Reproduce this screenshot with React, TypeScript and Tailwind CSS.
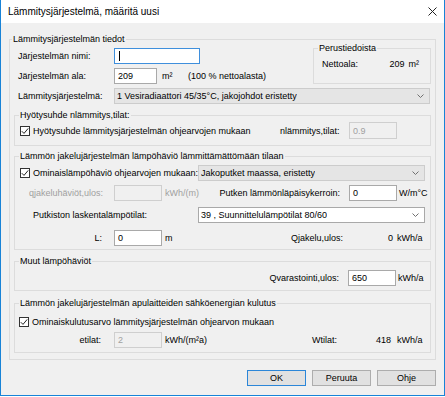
import React from "react";

const Chevron = () => (
  <svg width="7" height="4" viewBox="0 0 7 4" className="shrink-0">
    <path d="M0.5 0.5 L3.5 3.5 L6.5 0.5" fill="none" stroke="#707070" strokeWidth="1" />
  </svg>
);

const Check = () => (
  <span className="w-[10px] h-[10px] border border-[#333333] bg-white flex items-center justify-center shrink-0">
    <svg width="8" height="8" viewBox="0 0 8 8">
      <path d="M0.8 4.2 L3 6.4 L7.2 1.4" fill="none" stroke="#222222" strokeWidth="1" />
    </svg>
  </span>
);

interface BoxProps {
  className?: string;
  value?: string;
  disabled?: boolean;
  focused?: boolean;
}

const TextBox: React.FC<BoxProps> = ({ className = "", value, disabled, focused }) => (
  <div
    className={`h-[16px] border flex items-center pl-[3px] shrink-0 ${
      disabled
        ? "bg-[#f0f0f0] border-[#cfcfcf] text-[#a0a0a0]"
        : focused
        ? "bg-white border-[#3f8fdc]"
        : "bg-white border-[#a9a9a9]"
    } ${className}`}
  >
    {focused ? <span className="w-px h-[10px] bg-black ml-[1px]" /> : value}
  </div>
);

const Combo: React.FC<{ className?: string; value: string; gray?: boolean }> = ({ className = "", value, gray }) => (
  <div
    className={`h-[16px] border flex items-center justify-between pl-[2px] pr-[5px] shrink-0 ${
      gray ? "bg-[#e5e5e5] border-[#cccccc]" : "bg-white border-[#a9a9a9]"
    } ${className}`}
  >
    <span className="truncate">{value}</span>
    <Chevron />
  </div>
);

const Group: React.FC<{ title: string; className?: string; children: React.ReactNode }> = ({
  title,
  className = "",
  children,
}) => (
  <fieldset className={`border border-[#dcdcdc] ${className}`}>
    <legend className="ml-[4px] px-[1px] leading-[12px]">{title}</legend>
    {children}
  </fieldset>
);

const Btn: React.FC<{ label: string; primary?: boolean }> = ({ label, primary }) => (
  <button
    className={`w-[59px] h-[16px] border bg-[#e1e1e1] flex items-center justify-center leading-[12px] ${
      primary ? "border-[#2b86d8]" : "border-[#adadad]"
    }`}
  >
    {label}
  </button>
);

export default function App() {
  return (
    <div className="w-[445px] h-[396px] flex flex-col border-x border-b border-[#1883d7] bg-[#f0f0f0] text-[9px] leading-[12px] text-black whitespace-nowrap font-['Liberation_Sans',Arial,sans-serif]">
      {/* title bar */}
      <div className="h-[23px] bg-white flex items-center justify-between pl-[7px] pr-[7px] shrink-0">
        <span className="text-[10px]">Lämmitysjärjestelmä, määritä uusi</span>
        <svg width="9" height="9" viewBox="0 0 9 9">
          <path d="M0.5 0.5 L8.5 8.5 M8.5 0.5 L0.5 8.5" stroke="#222222" strokeWidth="1" />
        </svg>
      </div>

      <div className="flex-1 px-[8px] pt-[10px] flex flex-col">
        <fieldset className="border border-[#dcdcdc] pb-[6px]">
          <legend className="ml-[2px] px-[1px] leading-[12px]">Lämmitysjärjestelmän tiedot</legend>
          <div className="px-[4px] flex flex-col">
            {/* top area */}
            <div className="flex pt-[3px]">
              <div className="flex-1 flex flex-col gap-[4px]">
                <div className="flex items-center h-[16px]">
                  <span className="w-[100px] pl-[4px]">Järjestelmän nimi:</span>
                  <TextBox className="w-[86px]" focused />
                </div>
                <div className="flex items-center h-[16px]">
                  <span className="w-[100px] pl-[4px]">Järjestelmän ala:</span>
                  <TextBox className="w-[43px]" value="209" />
                  <span className="w-[31px] pl-[5px]">m²</span>
                  <span>(100 % nettoalasta)</span>
                </div>
              </div>
              <Group title="Perustiedoista" className="w-[118px] mt-[-6px] pb-[13px]">
                <div className="flex justify-between pt-[4px] pl-[8px] pr-[11px]">
                  <span>Nettoala:</span>
                  <span>
                    209<span className="ml-[4px]">m²</span>
                  </span>
                </div>
              </Group>
            </div>

            <div className="flex items-center h-[16px] mt-[4px]">
              <span className="w-[100px] pl-[4px]">Lämmitysjärjestelmä:</span>
              <Combo className="w-[316px]" value="1 Vesiradiaattori 45/35°C, jakojohdot eristetty" gray />
            </div>

            {/* hyötysuhde */}
            <Group title="Hyötysuhde nlämmitys,tilat:" className="mt-[5px] pb-[6px]">
              <div className="flex items-center mt-[1px] pl-[5px]">
                <div className="w-[260px] flex items-center gap-[3px]">
                  <Check />
                  <span>Hyötysuhde lämmitysjärjestelmän ohjearvojen mukaan</span>
                </div>
                <span className="w-[69px]">nlämmitys,tilat:</span>
                <TextBox className="w-[48px] h-[17px]" value="0.9" disabled />
              </div>
            </Group>

            {/* jakelu */}
            <Group title="Lämmön jakelujärjestelmän lämpöhäviö lämmittämättömään tilaan" className="mt-[4px] pb-[3px]">
              <div className="flex items-center mt-[3px] pl-[5px]">
                <div className="w-[178px] flex items-center gap-[3px]">
                  <Check />
                  <span>Ominaislämpöhäviö ohjearvojen mukaan:</span>
                </div>
                <Combo className="w-[227px]" value="Jakoputket maassa, eristetty" gray />
              </div>
              <div className="flex items-center mt-[4px] pl-[5px]">
                <span className="w-[94px] text-right pr-[11px] text-[#a0a0a0]">qjakeluhäviöt,ulos:</span>
                <TextBox className="w-[48px]" disabled />
                <div className="w-[187px] flex justify-between">
                  <span className="pl-[3px] text-[#a0a0a0]">kWh/(m)</span>
                  <span className="pr-[9px]">Putken lämmönläpäisykerroin:</span>
                </div>
                <TextBox className="w-[48px]" value="0" />
                <span className="pl-[2px]">W/m°C</span>
              </div>
              <div className="flex items-center mt-[6px] pl-[5px]">
                <span className="w-[178px] pl-[13px]">Putkiston laskentalämpötilat:</span>
                <Combo className="w-[227px]" value="39 , Suunnittelulämpötilat 80/60" />
              </div>
              <div className="flex items-center mt-[7px] pl-[5px]">
                <span className="w-[94px] text-right pr-[12px]">L:</span>
                <TextBox className="w-[48px]" value="0" />
                <div className="w-[187px] flex justify-between">
                  <span className="pl-[3px]">m</span>
                  <span className="pr-[6px]">Qjakelu,ulos:</span>
                </div>
                <span className="w-[48px] text-right pr-[4px]">0</span>
                <span>kWh/a</span>
              </div>
            </Group>

            {/* muut */}
            <Group title="Muut lämpöhäviöt" className="mt-[5px] pb-[4px]">
              <div className="flex items-center mt-[3px]">
                <span className="flex-1 text-right pr-[9px]">Qvarastointi,ulos:</span>
                <TextBox className="w-[48px]" value="650" />
                <span className="w-[34px] pl-[2px]">kWh/a</span>
              </div>
            </Group>

            {/* apulaitteet */}
            <Group title="Lämmön jakelujärjestelmän apulaitteiden sähköenergian kulutus" className="mt-[6px] pb-[4px]">
              <div className="flex items-center gap-[3px] h-[14px] mt-[6px] pl-[4px]">
                <Check />
                <span>Ominaiskulutusarvo lämmitysjärjestelmän ohjearvon mukaan</span>
              </div>
              <div className="flex items-center mt-[3px] pl-[5px]">
                <span className="w-[94px] text-right pr-[13px]">etilat:</span>
                <TextBox className="w-[48px]" value="2" disabled />
                <div className="w-[187px] flex justify-between">
                  <span className="pl-[3px]">kWh/(m²a)</span>
                  <span className="pr-[12px]">Wtilat:</span>
                </div>
                <span className="w-[48px] text-right pr-[6px]">418</span>
                <span>kWh/a</span>
              </div>
            </Group>
          </div>
        </fieldset>

        <div className="flex justify-end gap-[6px] mt-[10px]">
          <Btn label="OK" primary />
          <Btn label="Peruuta" />
          <Btn label="Ohje" />
        </div>
      </div>
    </div>
  );
}
